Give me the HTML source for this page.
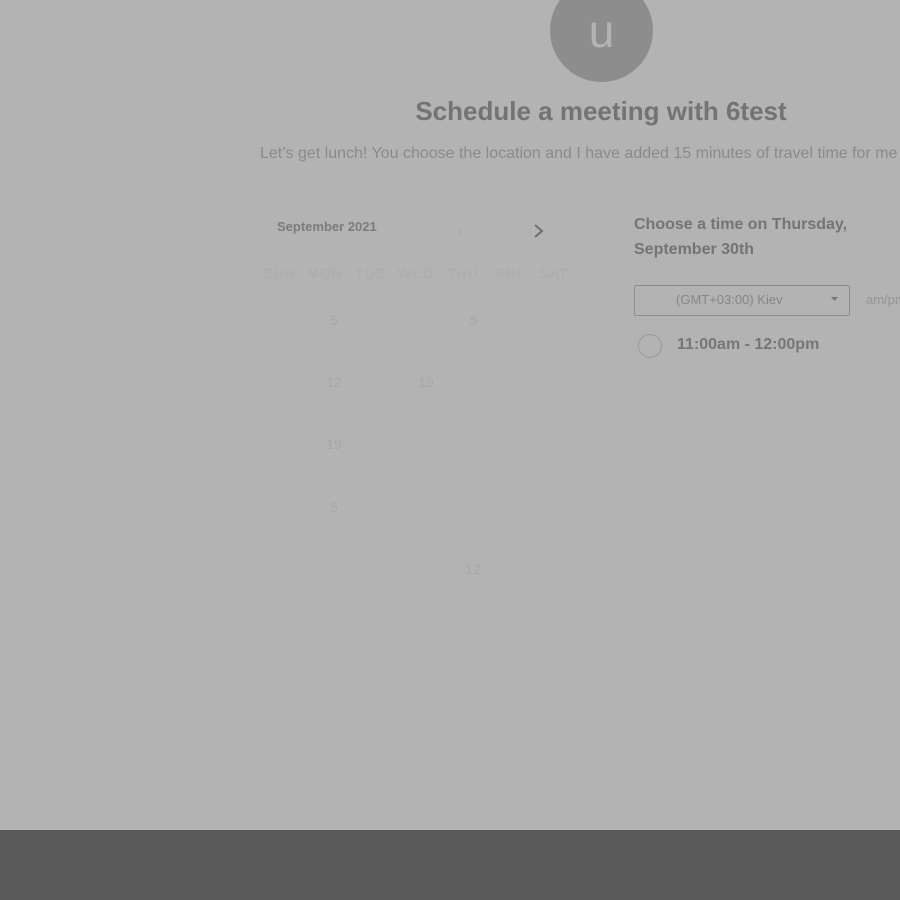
<!DOCTYPE html>
<html><head><style>
html,body{margin:0;padding:0}
body{width:900px;height:900px;background:#b3b3b3;position:relative;overflow:hidden;font-family:"Liberation Sans",sans-serif}
.a{position:absolute;white-space:nowrap}
.n{position:absolute;color:#a8a8a8;font-size:14px;transform:translate(-50%,-50%)}
.d{position:absolute;color:#acacac;font-size:14px;transform:translate(-50%,-50%);letter-spacing:1px}
</style></head><body>
<div class="a" style="left:550px;top:-21px;width:103px;height:103px;border-radius:50%;background:#8d8d8d"></div>
<div class="a" style="left:550px;top:6px;width:103px;text-align:center;color:#b3b3b3;font-size:46px;line-height:50px">u</div>
<div class="a" style="left:0;width:1202px;top:96px;text-align:center;font-size:26px;font-weight:bold;color:#737373">Schedule a meeting with 6test</div>
<div class="a" style="left:260px;top:145px;font-size:16px;color:#8a8a8a">Let’s get lunch! You choose the location and I have added 15 minutes of travel time for me</div>
<div class="a" style="left:277px;top:219px;font-size:13px;font-weight:bold;color:#7b7b7b">September 2021</div>
<div class="a" style="left:457px;top:221px;font-size:18px;color:#a9a9a9">‹</div>
<svg class="a" style="left:532px;top:223px" width="14" height="16"><path d="M3 2l7 6-7 6" fill="none" stroke="#6e6e6e" stroke-width="2"/></svg>
<div class="d" style="left:280px;top:273px">SUN</div>
<div class="d" style="left:325px;top:273px">MON</div>
<div class="d" style="left:371px;top:273px">TUE</div>
<div class="d" style="left:416px;top:273px">WED</div>
<div class="d" style="left:463px;top:273px">THU</div>
<div class="d" style="left:509px;top:273px">FRI</div>
<div class="d" style="left:554px;top:273px">SAT</div>
<div class="n" style="left:334px;top:320px">5</div>
<div class="n" style="left:473px;top:320px">5</div>
<div class="n" style="left:334px;top:382px">12</div>
<div class="n" style="left:426px;top:382px">19</div>
<div class="n" style="left:334px;top:444px">19</div>
<div class="n" style="left:334px;top:507px">5</div>
<div class="n" style="left:473px;top:569px">12</div>
<div class="a" style="left:634px;top:212px;font-size:16px;font-weight:bold;color:#747474;line-height:25px">Choose a time on Thursday,<br>September 30th</div>
<div class="a" style="left:634px;top:285px;width:214px;height:29px;border:1px solid #8c8c8c;border-radius:2px"></div>
<div class="a" style="left:676px;top:292px;font-size:13px;color:#868686">(GMT+03:00) Kiev</div>
<svg class="a" style="left:831px;top:297px" width="7" height="5"><path d="M0 0h7L3.5 4z" fill="#777"/></svg>
<div class="a" style="left:866px;top:292px;font-size:13px;color:#959595">am/pm</div>
<div class="a" style="left:638px;top:334px;width:22px;height:22px;border:1px solid #9a9a9a;border-radius:50%"></div>
<div class="a" style="left:677px;top:336px;font-size:16px;font-weight:bold;color:#767676">11:00am - 12:00pm</div>
<div class="a" style="left:0;top:830px;width:900px;height:70px;background:#595959"></div>
</body></html>
